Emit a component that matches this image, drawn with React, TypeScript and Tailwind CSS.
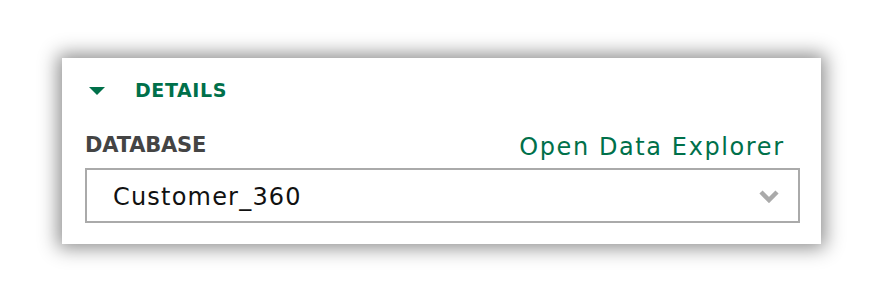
export default function App() {
  return (
    <div className="w-[884px] h-[307px] bg-white pt-[58px] pl-[62px]" style={{ fontFamily: '"DejaVu Sans", "Noto Sans", sans-serif' }}>
      <div className="w-[759px] h-[186px] bg-white shadow-[0_0_18px_4px_rgba(0,0,0,0.45)] pl-[23px] pr-[21px] pt-[20px]">
        <div className="flex items-center h-[24px]">
          <svg width="16" height="8" viewBox="0 0 16 8" className="ml-[4px] mt-[1px]">
            <polygon points="0,0 16,0 8,8" fill="#00704a" />
          </svg>
          <span className="ml-[30px] text-[19px] font-bold text-[#00704a] tracking-[0.6px]">DETAILS</span>
        </div>
        <div className="flex items-end justify-between mt-[28px] h-[30px] pr-[17px]">
          <span className="text-[21px] font-bold text-[#444444] leading-none mb-[4px] tracking-[-0.2px]">DATABASE</span>
          <span className="text-[24px] text-[#00704a] leading-none mb-[1px] tracking-[1.6px] mr-[-1.6px]">Open Data Explorer</span>
        </div>
        <div className="mt-[8px] h-[55px] border-2 border-[#aaaaaa] flex items-center justify-between pl-[26px] pr-[18px]">
          <span className="text-[24px] text-[#111111] tracking-[1.2px] mt-[3px]">Customer_360</span>
          <svg width="22" height="14" viewBox="0 0 22 14">
            <polyline points="3,3 11,11 19,3" fill="none" stroke="#aaaaaa" strokeWidth="4.5" />
          </svg>
        </div>
      </div>
    </div>
  );
}
